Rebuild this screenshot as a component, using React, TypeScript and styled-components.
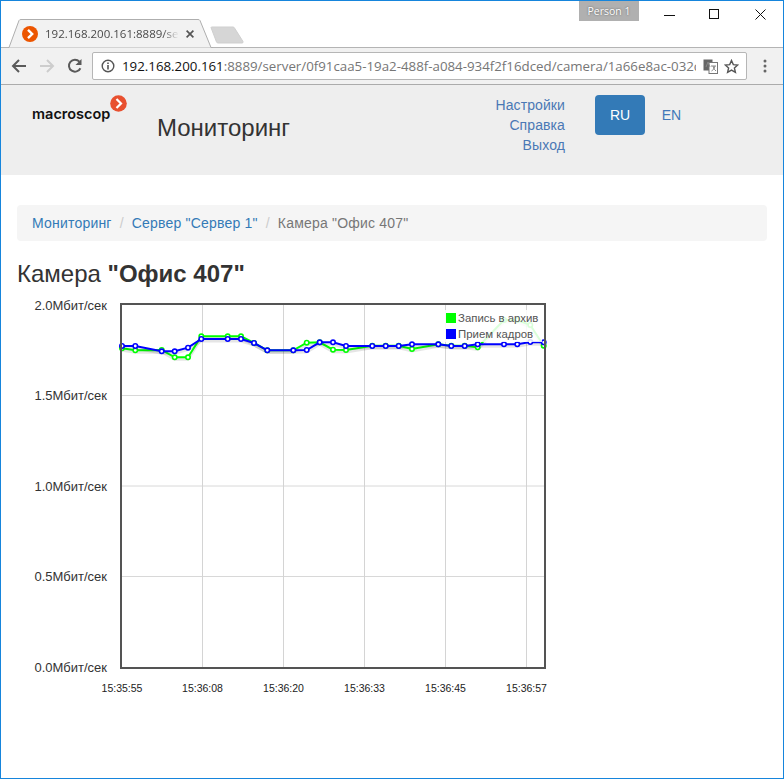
import React from "react";
import styled, { createGlobalStyle } from "styled-components";

const GlobalStyle = createGlobalStyle`
    html, body {
        margin: 0;
        padding: 0;
        background: #fff;
    }
    body {
        font-family: "Liberation Sans", Arial, sans-serif;
        font-size: 14px;
        color: #333;
    }
`;

const Window = styled.div`
    box-sizing: border-box;
    width: 784px;
    height: 779px;
    border: 1px solid #1685dc;
    overflow: hidden;
    background: #fff;
`;

const TitleBar = styled.div`
    display: flex;
    height: 46px;
    border-bottom: 1px solid #b4b4b4;
`;

const TabStrip = styled.div`
    display: flex;
    align-items: flex-end;
    flex: 1;
    padding-left: 7px;
`;

const Tab = styled.div`
    position: relative;
    top: 1px;
    width: 205px;
    height: 29px;
    box-sizing: border-box;
    display: flex;
    align-items: center;
    padding: 0 0 0 14px;
`;

const TabShape = styled.svg`
    position: absolute;
    left: 0;
    top: 0;
`;

const Favicon = styled.svg`
    position: relative;
    flex: none;
`;

const TabTitle = styled.span`
    position: relative;
    width: 134px;
    margin-left: 7px;
    font-family: "Open Sans", sans-serif;
    font-size: 11.5px;
    color: #4a4a4a;
    white-space: nowrap;
    overflow: hidden;
    mask-image: linear-gradient(to right, #000 88%, transparent 100%);
`;

const TabClose = styled.svg`
    position: relative;
    margin-left: 7px;
`;

const NewTab = styled.svg`
    margin: 0 0 3px -3px;
`;

const PersonBadge = styled.div`
    width: 60px;
    height: 20px;
    margin-right: 25px;
    background: #b0b0b0;
    color: #fff;
    font-family: "Open Sans", sans-serif;
    font-size: 10.5px;
    line-height: 20px;
    text-align: center;
    text-shadow: 0 0 2px #555;
`;

const WindowControls = styled.div`
    display: flex;
    height: 30px;
    padding: 8px 17px 0 0;
    gap: 34px;
    align-items: flex-start;
    box-sizing: border-box;
`;

const Toolbar = styled.div`
    display: flex;
    align-items: center;
    height: 36px;
    padding-left: 10px;
    background: #f1f1f1;
    border-bottom: 1px solid #ababab;
`;

const NavIcon = styled.svg`
    flex: none;
    margin-right: 12px;
`;

const AddressBox = styled.div`
    display: flex;
    align-items: center;
    box-sizing: border-box;
    width: 655px;
    height: 28px;
    margin-left: -3px;
    padding: 0 7px 0 8px;
    background: #fff;
    border: 1px solid #b6b6b6;
    border-radius: 2px;
`;

const InfoIcon = styled.svg`
    flex: none;
`;

const UrlText = styled.div`
    flex: 1;
    margin-left: 7px;
    overflow: hidden;
    white-space: nowrap;
    font-family: "Open Sans", sans-serif;
    font-size: 13.3px;
    color: #767676;
`;

const UrlHost = styled.span`
    color: #111;
`;

const AddressIcon = styled.svg<{ $gap: number }>`
    flex: none;
    margin-left: ${p => p.$gap}px;
`;

const MenuDots = styled.svg`
    margin-left: 16px;
`;

const Header = styled.header`
    display: flex;
    height: 90px;
    background: #eee;
`;

const Brand = styled.div`
    position: relative;
    width: 156px;
    flex: none;
`;

const LogoText = styled.span`
    position: absolute;
    left: 31px;
    top: 20px;
    font-family: "Inter", sans-serif;
    font-size: 14.5px;
    font-weight: 600;
    color: #111;
`;

const LogoMark = styled.svg`
    position: absolute;
    left: 109px;
    top: 10px;
`;

const PageTitle = styled.h1`
    flex: none;
    width: 300px;
    margin: 27px 0 0;
    font-size: 24px;
    font-weight: 400;
    line-height: 32px;
    color: #333;
`;

const HeaderNav = styled.nav`
    display: flex;
    flex-direction: column;
    align-items: flex-end;
    width: 108px;
    padding-top: 10px;
`;

const NavLink = styled.a`
    font-size: 14px;
    line-height: 20px;
    letter-spacing: 0.1px;
    color: #4a78b5;
`;

const LangSwitch = styled.div`
    display: flex;
    align-items: center;
    height: 40px;
    margin: 10px 0 0 30px;
`;

const LangButton = styled.a<{ $active?: boolean }>`
    display: flex;
    align-items: center;
    justify-content: center;
    width: 50px;
    height: 40px;
    margin-left: ${p => (p.$active ? 0 : 1.5)}px;
    border-radius: 4px;
    font-size: 14px;
    color: ${p => (p.$active ? "#fff" : "#4278b8")};
    background: ${p => (p.$active ? "#337ab7" : "transparent")};
`;

const Main = styled.main`
    padding: 30px 16px 0;
`;

const Breadcrumb = styled.ol`
    display: flex;
    height: 36px;
    box-sizing: border-box;
    margin: 0;
    padding: 8px 15px;
    list-style: none;
    background: #f5f5f5;
    border-radius: 4px;
    line-height: 20px;
    letter-spacing: 0.2px;
`;

const Crumb = styled.li<{ $active?: boolean }>`
    color: ${p => (p.$active ? "#777" : "#337ab7")};
    &:not(:first-child)::before {
        content: "/";
        padding: 0 8px;
        color: #ccc;
    }
`;

const CameraTitle = styled.h2`
    margin: 19px 0 0;
    font-size: 24px;
    font-weight: 400;
    line-height: 28px;
    color: #333;
`;

const ChartSvg = styled.svg`
    display: block;
    margin-top: 7px;
`;

const YLabel = styled.text`
    font-size: 13px;
    fill: #333;
    text-anchor: end;
`;

const XLabel = styled.text`
    font-size: 10.5px;
    fill: #222;
    text-anchor: middle;
`;

const LegendLabel = styled.text`
    font-size: 11.4px;
    fill: #545454;
`;

const XS = [122, 135.3, 161.7, 174.7, 188, 201.3, 227.7, 241, 254, 267.3, 293.3, 306.7, 319.7, 333, 346, 372.3, 385.7, 398.7, 412, 438.3, 451.3, 464.7, 477.7, 504, 517.3, 530.3, 543.7];
const GREEN = [348.3, 350.3, 350, 357.3, 357.3, 336.3, 336.3, 336.3, 343, 350.3, 350.3, 342.7, 342.3, 349.7, 350, 345.7, 345.7, 345.7, 349, 344.3, 345.7, 345.7, 347.3, 320, 320, 325, 345.7];
const BLUE = [346, 346, 351.3, 351.3, 347.7, 339, 339, 339, 343, 350.3, 350.3, 350, 342.3, 342.3, 346, 346, 346, 346, 344.3, 344.3, 346, 346, 344.3, 344.3, 344.3, 342, 342.3];

const Y_TICKS = [
    { y: 305, label: "2.0Мбит/сек" },
    { y: 395.5, label: "1.5Мбит/сек" },
    { y: 486, label: "1.0Мбит/сек" },
    { y: 576.5, label: "0.5Мбит/сек" },
    { y: 667, label: "0.0Мбит/сек" },
];

const X_TICKS = [
    { x: 122, label: "15:35:55" },
    { x: 202.5, label: "15:36:08" },
    { x: 283.5, label: "15:36:20" },
    { x: 364.5, label: "15:36:33" },
    { x: 445.5, label: "15:36:45" },
    { x: 526.5, label: "15:36:57" },
];

function Series({ values, color }: { values: number[]; color: string }) {
    const points = values.map((y, i) => `${XS[i]},${y}`).join(" ");
    const shadow = values.map((y, i) => `${XS[i]},${y + 2}`).join(" ");
    return (
        <g>
            <polyline points={shadow} fill="none" stroke="rgba(0,0,0,0.1)" strokeWidth={3} />
            <polyline points={points} fill="none" stroke={color} strokeWidth={2} />
            {values.map((y, i) => (
                <circle key={i} cx={XS[i]} cy={y} r={2.2} fill="#fff" stroke={color} strokeWidth={1.6} />
            ))}
        </g>
    );
}

function Chart() {
    return (
        <ChartSvg width={540} height={400} viewBox="17 295 540 400">
            {Y_TICKS.slice(1, 4).map(t => (
                <line key={t.y} x1={121} x2={545} y1={t.y} y2={t.y} stroke="#d8d8d8" />
            ))}
            {X_TICKS.slice(1).map(t => (
                <line key={t.x} x1={t.x} x2={t.x} y1={304} y2={668} stroke="#d4d4d4" />
            ))}
            <Series values={GREEN} color="#00ff00" />
            <Series values={BLUE} color="#0000ff" />
            <rect x={445} y={310} width={97} height={32} fill="#fff" fillOpacity={0.85} />
            <rect x={446} y={313} width={10} height={10} fill="#00ff00" />
            <rect x={446} y={329} width={10} height={10} fill="#0000ff" />
            <LegendLabel x={458} y={322}>Запись в архив</LegendLabel>
            <LegendLabel x={458} y={338}>Прием кадров</LegendLabel>
            <rect x={121} y={304} width={424} height={364} fill="none" stroke="#545454" strokeWidth={2} />
            {Y_TICKS.map(t => (
                <YLabel key={t.label} x={107} y={t.y + 4.5}>{t.label}</YLabel>
            ))}
            {X_TICKS.map(t => (
                <XLabel key={t.label} x={t.x} y={692}>{t.label}</XLabel>
            ))}
        </ChartSvg>
    );
}

export default function App() {
    return (
        <Window>
            <GlobalStyle />
            <TitleBar>
                <TabStrip>
                    <Tab>
                        <TabShape width={205} height={29} viewBox="0 0 205 29">
                            <path d="M0 28.5 H1 L11 1.5 Q11.5 0.5 13 0.5 H190 Q191.5 0.5 192 1.5 L203 28.5 H205" fill="#f2f2f2" stroke="#aeaeae" />
                        </TabShape>
                        <Favicon width={16} height={16} viewBox="0 0 16 16">
                            <circle cx={8} cy={8} r={8} fill="#ec5500" />
                            <path d="M6 3.8 L10.2 8 L6 12.2" fill="none" stroke="#fff" strokeWidth={2.4} />
                        </Favicon>
                        <TabTitle>192.168.200.161:8889/server</TabTitle>
                        <TabClose width={8} height={8} viewBox="0 0 8 8">
                            <path d="M0.6 0.6 L7.4 7.4 M7.4 0.6 L0.6 7.4" stroke="#555" strokeWidth={1.7} />
                        </TabClose>
                    </Tab>
                    <NewTab width={34} height={18} viewBox="0 0 34 18">
                        <path d="M1 1.5 Q1 1 2 1 H23 Q24 1 24.5 2 L33 15.5 Q33.5 17 32 17 H8 Q7 17 6.5 16 Z" fill="#d6d6d6" stroke="#cfcfcf" />
                    </NewTab>
                </TabStrip>
                <PersonBadge>Person 1</PersonBadge>
                <WindowControls>
                    <svg width={11} height={11} viewBox="0 0 11 11">
                        <path d="M0 6.5 H11" stroke="#111" />
                    </svg>
                    <svg width={12} height={11} viewBox="0 0 12 11">
                        <rect x={0.5} y={0.5} width={9} height={9} fill="none" stroke="#111" />
                    </svg>
                    <svg width={11} height={11} viewBox="0 0 11 11">
                        <path d="M0.5 0.5 L10.5 10.5 M10.5 0.5 L0.5 10.5" stroke="#111" />
                    </svg>
                </WindowControls>
            </TitleBar>
            <Toolbar>
                <NavIcon width={16} height={16} viewBox="0 0 16 16">
                    <path d="M15 8 H2.5 M8 2 L2 8 L8 14" fill="none" stroke="#5a5a5a" strokeWidth={2} />
                </NavIcon>
                <NavIcon width={16} height={16} viewBox="0 0 16 16">
                    <path d="M1 8 H13.5 M8 2 L14 8 L8 14" fill="none" stroke="#cdcdcd" strokeWidth={2} />
                </NavIcon>
                <NavIcon width={16} height={16} viewBox="0 0 16 16">
                    <path d="M13.4 10.2 A6 6 0 1 1 12.4 3.6" fill="none" stroke="#5a5a5a" strokeWidth={2} />
                    <path d="M14.5 1 V7 H8.5 Z" fill="#5a5a5a" />
                </NavIcon>
                <AddressBox>
                    <InfoIcon width={14} height={14} viewBox="0 0 14 14">
                        <circle cx={7} cy={7} r={5.8} fill="none" stroke="#555" strokeWidth={1.4} />
                        <path d="M7 6 V10.5 M7 3.5 V5" stroke="#555" strokeWidth={1.6} />
                    </InfoIcon>
                    <UrlText>
                        <UrlHost>192.168.200.161</UrlHost>:8889/server/0f91caa5-19a2-488f-a084-934f2f16dced/camera/1a66e8ac-032c-4a1b
                    </UrlText>
                    <AddressIcon $gap={7} width={15} height={15} viewBox="0 0 15 15">
                        <rect x={0.5} y={0.5} width={9} height={11} fill="#666" />
                        <rect x={6} y={3.5} width={8.5} height={11} fill="#fff" stroke="#777" />
                        <path d="M3 8 L5 3 L7 8 M8 7 H13 M10 7 Q11 11 13 12 M12 7 Q11 11 8.5 12" fill="none" stroke="#888" />
                    </AddressIcon>
                    <AddressIcon $gap={6} width={15} height={15} viewBox="0 0 15 15">
                        <path d="M7.5 1.5 L9.3 5.6 L13.8 6 L10.4 9 L11.4 13.4 L7.5 11.1 L3.6 13.4 L4.6 9 L1.2 6 L5.7 5.6 Z" fill="none" stroke="#555" strokeWidth={1.4} />
                    </AddressIcon>
                </AddressBox>
                <MenuDots width={4} height={14} viewBox="0 0 4 14">
                    <circle cx={2} cy={2} r={1.5} fill="#666" />
                    <circle cx={2} cy={7} r={1.5} fill="#666" />
                    <circle cx={2} cy={12} r={1.5} fill="#666" />
                </MenuDots>
            </Toolbar>
            <Header>
                <Brand>
                    <LogoText>macroscop</LogoText>
                    <LogoMark width={17} height={17} viewBox="0 0 17 17">
                        <circle cx={8.5} cy={8.5} r={8.3} fill="#e8502f" />
                        <path d="M6.5 4 L11 8.5 L6.5 13" fill="none" stroke="#fff" strokeWidth={2.2} />
                    </LogoMark>
                </Brand>
                <PageTitle>Мониторинг</PageTitle>
                <HeaderNav>
                    <NavLink>Настройки</NavLink>
                    <NavLink>Справка</NavLink>
                    <NavLink>Выход</NavLink>
                </HeaderNav>
                <LangSwitch>
                    <LangButton $active>RU</LangButton>
                    <LangButton>EN</LangButton>
                </LangSwitch>
            </Header>
            <Main>
                <Breadcrumb>
                    <Crumb>Мониторинг</Crumb>
                    <Crumb>Сервер "Сервер 1"</Crumb>
                    <Crumb $active>Камера "Офис 407"</Crumb>
                </Breadcrumb>
                <CameraTitle>
                    Камера <b>"Офис 407"</b>
                </CameraTitle>
                <Chart />
            </Main>
        </Window>
    );
}
